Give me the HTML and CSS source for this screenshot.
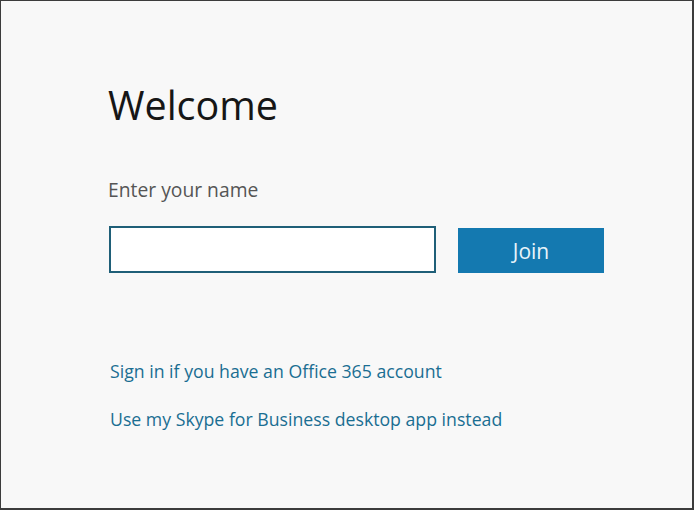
FILE: index.html
```html
<!DOCTYPE html>
<html lang="en">
<head>
    <meta charset="UTF-8">
    <title>Welcome</title>
    <link rel="stylesheet" href="styles.css">
</head>
<body>
    <div class="frame">
        <div class="content">
            <h1 class="title">Welcome</h1>
            <label class="name-label" for="name">Enter your name</label>
            <div class="join-row">
                <input type="text" id="name" class="name-input">
                <button class="btn-join">Join</button>
            </div>
            <div class="links">
                <a href="#">Sign in if you have an Office 365 account</a>
                <a href="#">Use my Skype for Business desktop app instead</a>
            </div>
        </div>
    </div>
</body>
</html>
```

FILE: styles.css
```css
html, body {
    margin: 0;
    padding: 0;
}
body {
    font-family: 'Open Sans', 'Noto Sans', sans-serif;
    background-color: #f8f8f8;
}
.frame {
    box-sizing: border-box;
    width: 694px;
    height: 510px;
    border: 1px solid #3c3c3c;
    border-bottom-width: 2px;
    border-right-width: 2px;
    background-color: #f8f8f8;
}
.content {
    padding: 78px 0 0 107px;
    display: flex;
    flex-direction: column;
}
.title {
    margin: 0;
    font-size: 39.5px;
    font-weight: 400;
    line-height: 52px;
    color: #161616;
}
.name-label {
    margin-top: 46px;
    font-size: 19.3px;
    line-height: 26px;
    color: #555;
}
.join-row {
    display: flex;
    align-items: center;
    gap: 22px;
    margin-top: 22px;
}
.name-input {
    box-sizing: border-box;
    width: 327px;
    height: 47px;
    margin: 0 0 0 1px;
    border: 2px solid #1f5f78;
    background: #fff;
    outline: none;
}
.btn-join {
    box-sizing: border-box;
    width: 146px;
    height: 45px;
    margin-top: 3px;
    border: none;
    background-color: #1479b0;
    color: #e8f4fa;
    font-family: inherit;
    font-size: 21px;
}
.links {
    display: flex;
    flex-direction: column;
    gap: 24px;
    margin-top: 86px;
    padding-left: 2px;
}
.links a {
    font-size: 17.7px;
    line-height: 24px;
    color: #1a6e92;
    text-decoration: none;
}
```
